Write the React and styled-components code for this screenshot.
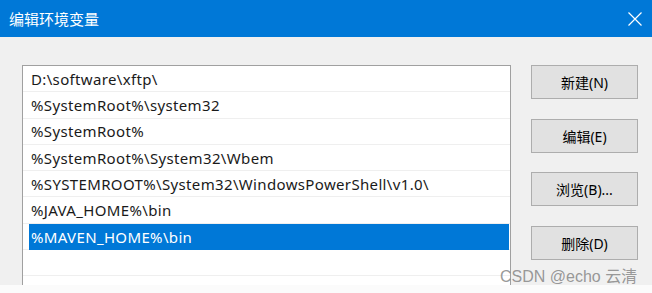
import React from 'react';
import styled, { createGlobalStyle } from 'styled-components';

const paths = [
    'D:\\software\\xftp\\',
    '%SystemRoot%\\system32',
    '%SystemRoot%',
    '%SystemRoot%\\System32\\Wbem',
    '%SYSTEMROOT%\\System32\\WindowsPowerShell\\v1.0\\',
    '%JAVA_HOME%\\bin',
    '%MAVEN_HOME%\\bin',
    '',
    '',
];

const buttons = ['新建(N)', '编辑(E)', '浏览(B)...', '删除(D)'];

function App() {
    return (
        <>
            <GlobalStyle />
            <Window>
                <TitleBar>
                    <Title>编辑环境变量</Title>
                    <CloseButton>
                        <svg width="14" height="14" viewBox="0 0 14 14">
                            <path d="M0.5 0.5 L13.5 13.5 M13.5 0.5 L0.5 13.5" stroke="#fff" strokeWidth="1.2" fill="none" />
                        </svg>
                    </CloseButton>
                </TitleBar>
                <Body>
                    <List>
                        {paths.map((p, i) => (
                            <Row key={i}>
                                <Item selected={i === 6}>{p}</Item>
                            </Row>
                        ))}
                    </List>
                    <Buttons>
                        {buttons.map((b) => (
                            <Button key={b}>{b}</Button>
                        ))}
                    </Buttons>
                </Body>
                <Watermark>CSDN @echo 云清</Watermark>
            </Window>
        </>
    )
}

export default App


const GlobalStyle = createGlobalStyle `
    html, body {
        margin: 0;
        padding: 0;
        background: #fbfbfb;
        overflow: hidden;
    }
    body {
        font-family: "Noto Sans", "Noto Sans CJK SC", sans-serif;
    }
`

const Window = styled.div `
    position: relative;
    width: 652px;
    height: 285px;
    background: #f0f0f0;
    overflow: hidden;
`

const TitleBar = styled.div `
    height: 37px;
    background: #0078d7;
    display: flex;
    align-items: center;
    justify-content: space-between;
    padding: 0 9px 0 9px;
    box-sizing: border-box;
`

const Title = styled.div `
    color: #fff;
    font-family: "Noto Sans CJK SC", sans-serif;
    font-size: 15px;
    line-height: 1;
`

const CloseButton = styled.div `
    display: flex;
    width: 14px;
    height: 14px;
    margin-right: 1px;
`

const Body = styled.div `
    display: flex;
    align-items: flex-start;
    padding: 28px 14px 0 22px;
    gap: 20px;
`

const List = styled.div `
    width: 489px;
    height: 260px;
    flex-shrink: 0;
    background: #fff;
    border: 1px solid #a0a0a0;
    box-sizing: border-box;
`

const Row = styled.div `
    height: 26.3px;
    box-sizing: border-box;
    border-bottom: 1px solid #efefef;
    display: flex;
    align-items: stretch;
    padding: 0 1px 0 6px;
`

const Item = styled.div `
    flex: 1;
    display: flex;
    align-items: center;
    padding-left: 2px;
    font-size: 15px;
    letter-spacing: 0.35px;
    white-space: pre;
    color: ${(p) => (p.selected ? '#fff' : '#1a1a1a')};
    background: ${(p) => (p.selected ? '#0078d7' : 'transparent')};
    margin-bottom: ${(p) => (p.selected ? '-1px' : '0')};
`

const Buttons = styled.div `
    display: flex;
    flex-direction: column;
    gap: 19.5px;
`

const Button = styled.div `
    width: 107px;
    height: 34px;
    box-sizing: border-box;
    background: #e1e1e1;
    border: 1px solid #adadad;
    display: flex;
    align-items: center;
    justify-content: center;
    font-family: "Noto Sans", "Noto Sans CJK SC", sans-serif;
    font-size: 14px;
    color: #000;
`

const Watermark = styled.div `
    position: absolute;
    left: 500px;
    top: 263px;
    font-family: "Liberation Sans", "Noto Sans CJK SC", sans-serif;
    font-size: 16px;
    color: rgba(140, 140, 140, 0.9);
    white-space: nowrap;
`
